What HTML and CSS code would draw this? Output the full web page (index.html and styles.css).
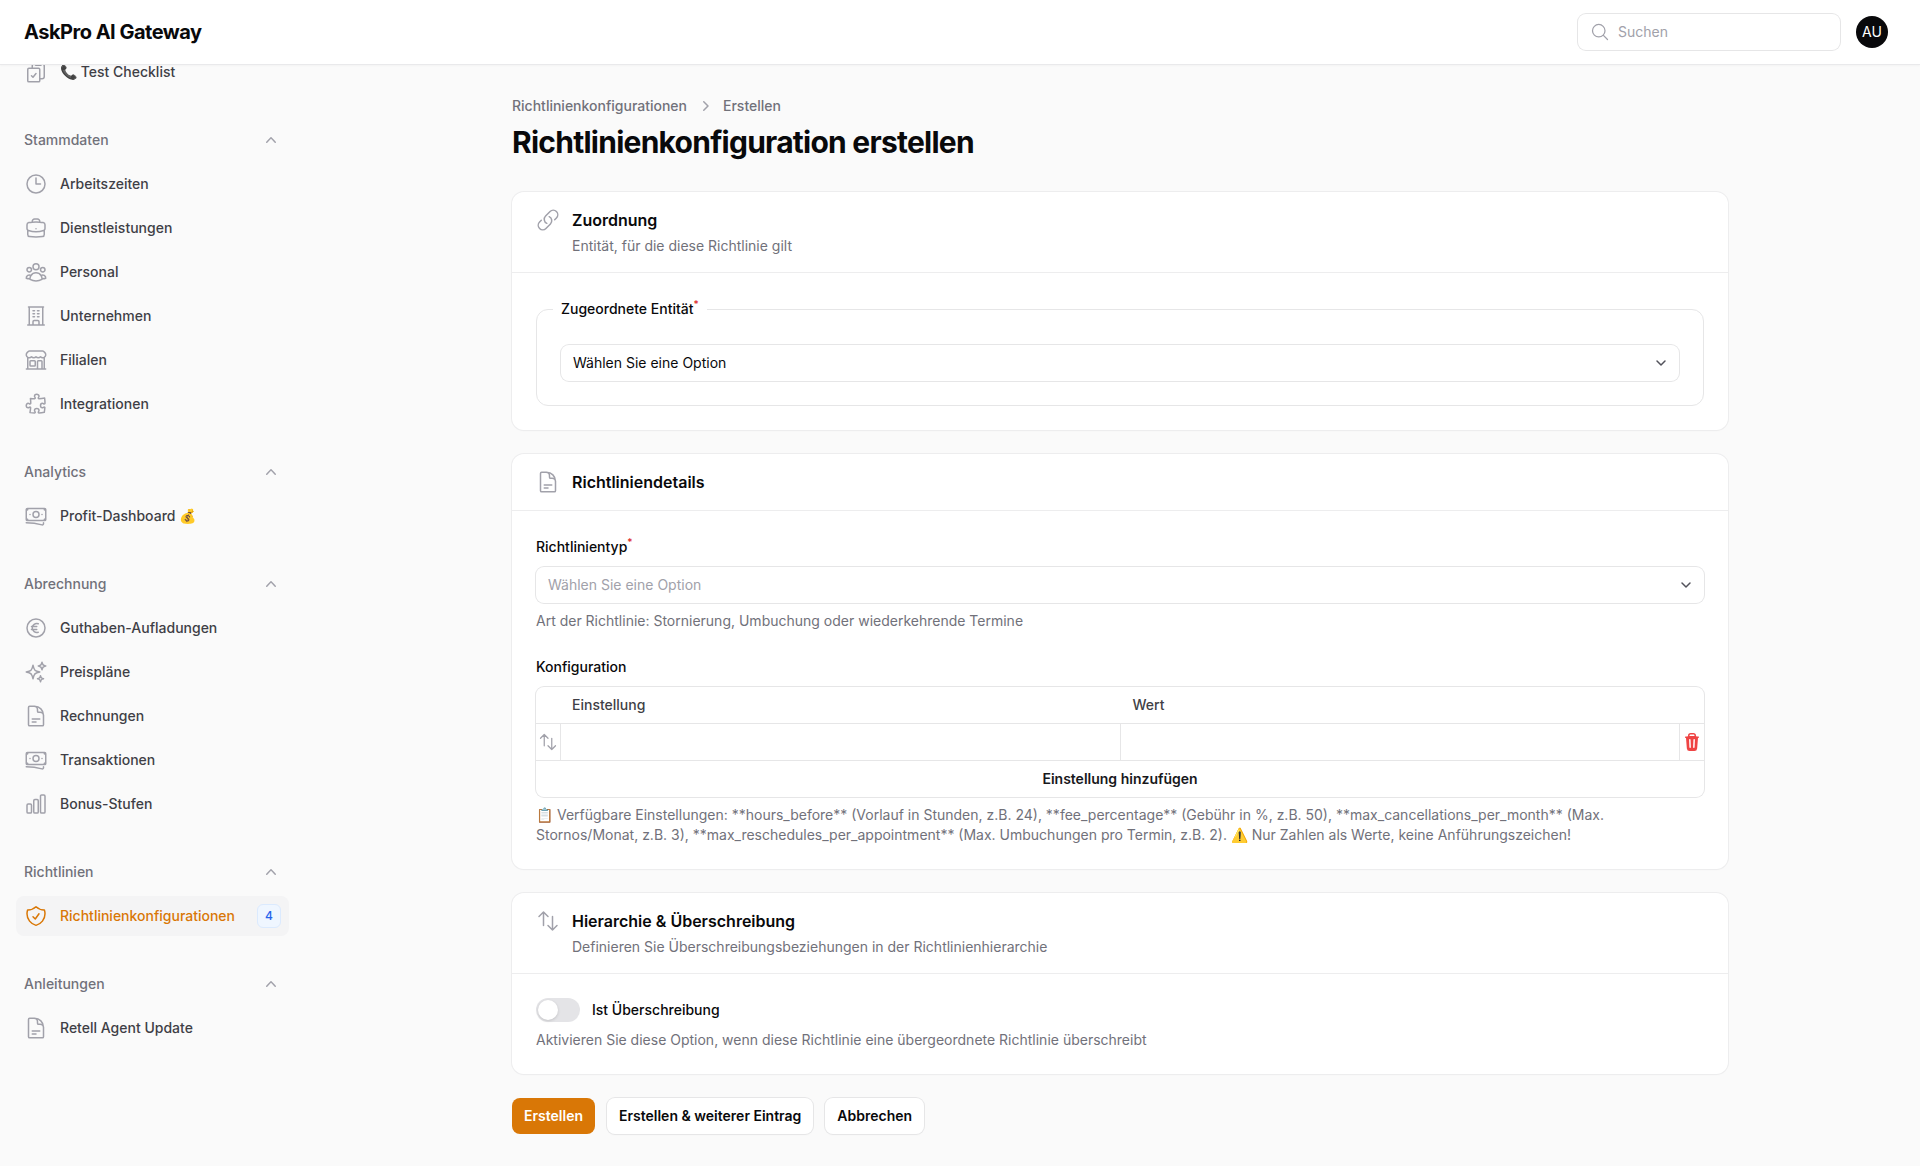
FILE: index.html
```html
<!DOCTYPE html>
<html lang="de">
  <head>
    <meta charset="UTF-8" />
    <meta name="viewport" content="width=device-width, initial-scale=1.0" />
    <title>Richtlinienkonfiguration erstellen</title>
    <link rel="stylesheet" href="styles.css">
  </head>
  <body>
    <svg class="icon-defs" xmlns="http://www.w3.org/2000/svg">
      <symbol id="i-checklist" viewBox="0 0 24 24"><path d="M11.35 3.836c-.065.21-.1.433-.1.664 0 .414.336.75.75.75h4.5a.75.75 0 0 0 .75-.75 2.25 2.25 0 0 0-.1-.664m-5.8 0A2.251 2.251 0 0 1 13.5 2.25H15c1.012 0 1.867.668 2.15 1.586m-5.8 0c-.376.023-.75.05-1.124.08C9.095 4.01 8.25 4.973 8.25 6.108V8.25m8.9-4.414c.376.023.75.05 1.124.08 1.131.094 1.976 1.057 1.976 2.192V16.5A2.25 2.25 0 0 1 18 18.75h-2.25m-7.5-10.5H4.875c-.621 0-1.125.504-1.125 1.125v11.25c0 .621.504 1.125 1.125 1.125h9.75c.621 0 1.125-.504 1.125-1.125V18.75m-7.5-10.5h6.375c.621 0 1.125.504 1.125 1.125v9.375m-8.25-3 1.5 1.5 3-3.75"/></symbol>
      <symbol id="i-clock" viewBox="0 0 24 24"><path d="M12 6v6h4.5m4.5 0a9 9 0 1 1-18 0 9 9 0 0 1 18 0Z"/></symbol>
      <symbol id="i-briefcase" viewBox="0 0 24 24"><path d="M20.25 14.15v4.25c0 1.094-.787 2.036-1.872 2.18-2.087.277-4.216.42-6.378.42s-4.291-.143-6.378-.42c-1.085-.144-1.872-1.086-1.872-2.18v-4.25m16.5 0a2.18 2.18 0 0 0 .75-1.661V8.706c0-1.081-.768-2.015-1.837-2.175a48.114 48.114 0 0 0-3.413-.387m4.5 8.006c-.194.165-.42.295-.673.38A23.978 23.978 0 0 1 12 15.75c-2.648 0-5.195-.429-7.577-1.22a2.016 2.016 0 0 1-.673-.38m0 0A2.18 2.18 0 0 1 3 12.489V8.706c0-1.081.768-2.015 1.837-2.175a48.111 48.111 0 0 1 3.413-.387m7.5 0V5.25A2.25 2.25 0 0 0 13.5 3h-3a2.25 2.25 0 0 0-2.25 2.25v.894m7.5 0a48.667 48.667 0 0 0-7.5 0M12 12.75h.008v.008H12v-.008Z"/></symbol>
      <symbol id="i-group" viewBox="0 0 24 24"><path d="M18 18.72a9.094 9.094 0 0 0 3.741-.479 3 3 0 0 0-4.682-2.72m.94 3.198.001.031c0 .225-.012.447-.037.666A11.944 11.944 0 0 1 12 21c-2.17 0-4.207-.576-5.963-1.584A6.062 6.062 0 0 1 6 18.719m12 0a5.971 5.971 0 0 0-.941-3.197m0 0A5.995 5.995 0 0 0 12 12.75a5.995 5.995 0 0 0-5.058 2.772m0 0a3 3 0 0 0-4.681 2.72 8.986 8.986 0 0 0 3.74.477m.94-3.197a5.971 5.971 0 0 0-.94 3.197M15 6.75a3 3 0 1 1-6 0 3 3 0 0 1 6 0Zm6 3a2.25 2.25 0 1 1-4.5 0 2.25 2.25 0 0 1 4.5 0Zm-13.5 0a2.25 2.25 0 1 1-4.5 0 2.25 2.25 0 0 1 4.5 0Z"/></symbol>
      <symbol id="i-office" viewBox="0 0 24 24"><path d="M3.75 21h16.5M4.5 3h15M5.25 3v18m13.5-18v18M9 6.75h1.5m-1.5 3h1.5m-1.5 3h1.5m3-6H15m-1.5 3H15m-1.5 3H15M9 21v-3.375c0-.621.504-1.125 1.125-1.125h3.75c.621 0 1.125.504 1.125 1.125V21"/></symbol>
      <symbol id="i-store" viewBox="0 0 24 24"><path d="M13.5 21v-7.5a.75.75 0 0 1 .75-.75h3a.75.75 0 0 1 .75.75V21m-4.5 0H2.36m11.14 0H18m0 0h3.64m-1.39 0V9.349M3.75 21V9.349m0 0a3.001 3.001 0 0 0 3.75-.615A2.993 2.993 0 0 0 9.75 9.75c.896 0 1.7-.393 2.25-1.016a2.993 2.993 0 0 0 2.25 1.016c.896 0 1.7-.393 2.25-1.015a3.001 3.001 0 0 0 3.75.614m-16.5 0a3.004 3.004 0 0 1-.621-4.72l1.189-1.19A1.5 1.5 0 0 1 5.378 3h13.243a1.5 1.5 0 0 1 1.06.44l1.19 1.189a3 3 0 0 1-.621 4.72M6.75 18h3.75a.75.75 0 0 0 .75-.75V13.5a.75.75 0 0 0-.75-.75H6.75a.75.75 0 0 0-.75.75v3.75c0 .414.336.75.75.75Z"/></symbol>
      <symbol id="i-puzzle" viewBox="0 0 24 24"><path d="M14.25 6.087c0-.355.186-.676.401-.959.221-.29.349-.634.349-1.003 0-1.036-1.007-1.875-2.25-1.875s-2.25.84-2.25 1.875c0 .369.128.713.349 1.003.215.283.401.604.401.959v0a.64.64 0 0 1-.657.643 48.39 48.39 0 0 1-4.163-.3c.186 1.613.293 3.25.315 4.907a.656.656 0 0 1-.658.663v0c-.355 0-.676-.186-.959-.401a1.647 1.647 0 0 0-1.003-.349c-1.036 0-1.875 1.007-1.875 2.25s.84 2.25 1.875 2.25c.369 0 .713-.128 1.003-.349.283-.215.604-.401.959-.401v0c.31 0 .555.26.532.57a48.039 48.039 0 0 1-.642 5.056c1.518.19 3.058.309 4.616.354a.64.64 0 0 0 .657-.643v0c0-.355-.186-.676-.401-.959a1.647 1.647 0 0 1-.349-1.003c0-1.035 1.008-1.875 2.25-1.875 1.243 0 2.25.84 2.25 1.875 0 .369-.128.713-.349 1.003-.215.283-.4.604-.4.959v0c0 .333.277.599.61.58a48.1 48.1 0 0 0 5.427-.63 48.05 48.05 0 0 0 .582-4.717.532.532 0 0 0-.533-.57v0c-.355 0-.676.186-.959.401-.29.221-.634.349-1.003.349-1.035 0-1.875-1.007-1.875-2.25s.84-2.25 1.875-2.25c.37 0 .713.128 1.003.349.283.215.604.401.96.401v0a.656.656 0 0 0 .658-.663 48.422 48.422 0 0 0-.37-5.36c-1.886.342-3.81.574-5.766.689a.578.578 0 0 1-.61-.58v0Z"/></symbol>
      <symbol id="i-banknotes" viewBox="0 0 24 24"><path d="M2.25 18.75a60.07 60.07 0 0 1 15.797 2.101c.727.198 1.453-.342 1.453-1.096V18.75M3.75 4.5v.75A.75.75 0 0 1 3 6h-.75m0 0v-.375c0-.621.504-1.125 1.125-1.125H20.25M2.25 6v9m18-10.5v.75c0 .414.336.75.75.75h.75m-1.5-1.5h.375c.621 0 1.125.504 1.125 1.125v9.75c0 .621-.504 1.125-1.125 1.125h-.375m1.5-1.5H21a.75.75 0 0 0-.75.75v.75m0 0H3.75m0 0h-.375a1.125 1.125 0 0 1-1.125-1.125V15m1.5 1.5v-.75A.75.75 0 0 0 3 15h-.75M15 10.5a3 3 0 1 1-6 0 3 3 0 0 1 6 0Zm3 0h.008v.008H18V10.5Zm-12 0h.008v.008H6V10.5Z"/></symbol>
      <symbol id="i-euro" viewBox="0 0 24 24"><path d="M14.25 7.756a4.5 4.5 0 1 0 0 8.488M7.5 10.5h5.25m-5.25 3h5.25M21 12a9 9 0 1 1-18 0 9 9 0 0 1 18 0Z"/></symbol>
      <symbol id="i-sparkles" viewBox="0 0 24 24"><path d="M9.813 15.904 9 18.75l-.813-2.846a4.5 4.5 0 0 0-3.09-3.09L2.25 12l2.846-.813a4.5 4.5 0 0 0 3.09-3.09L9 5.25l.813 2.846a4.5 4.5 0 0 0 3.09 3.09L15.75 12l-2.846.813a4.5 4.5 0 0 0-3.09 3.09ZM18.259 8.715 18 9.75l-.259-1.035a3.375 3.375 0 0 0-2.455-2.456L14.25 6l1.036-.259a3.375 3.375 0 0 0 2.455-2.456L18 2.25l.259 1.035a3.375 3.375 0 0 0 2.456 2.456L21.75 6l-1.035.259a3.375 3.375 0 0 0-2.456 2.456ZM16.894 20.567 16.5 21.75l-.394-1.183a2.25 2.25 0 0 0-1.423-1.423L13.5 18.75l1.183-.394a2.25 2.25 0 0 0 1.423-1.423l.394-1.183.394 1.183a2.25 2.25 0 0 0 1.423 1.423l1.183.394-1.183.394a2.25 2.25 0 0 0-1.423 1.423Z"/></symbol>
      <symbol id="i-document" viewBox="0 0 24 24"><path d="M19.5 14.25v-2.625a3.375 3.375 0 0 0-3.375-3.375h-1.5A1.125 1.125 0 0 1 13.5 7.125v-1.5a3.375 3.375 0 0 0-3.375-3.375H8.25m0 12.75h7.5m-7.5 3H12M10.5 2.25H5.625c-.621 0-1.125.504-1.125 1.125v17.25c0 .621.504 1.125 1.125 1.125h12.75c.621 0 1.125-.504 1.125-1.125V11.25a9 9 0 0 0-9-9Z"/></symbol>
      <symbol id="i-chart" viewBox="0 0 24 24"><path d="M3 13.125C3 12.504 3.504 12 4.125 12h2.25c.621 0 1.125.504 1.125 1.125v6.75C7.5 20.496 6.996 21 6.375 21h-2.25A1.125 1.125 0 0 1 3 19.875v-6.75ZM9.75 8.625c0-.621.504-1.125 1.125-1.125h2.25c.621 0 1.125.504 1.125 1.125v11.25c0 .621-.504 1.125-1.125 1.125h-2.25a1.125 1.125 0 0 1-1.125-1.125V8.625ZM16.5 4.125c0-.621.504-1.125 1.125-1.125h2.25C20.496 3 21 3.504 21 4.125v15.75c0 .621-.504 1.125-1.125 1.125h-2.25a1.125 1.125 0 0 1-1.125-1.125V4.125Z"/></symbol>
      <symbol id="i-shield" viewBox="0 0 24 24"><path d="M9 12.75 11.25 15 15 9.75m-3-7.036A11.959 11.959 0 0 1 3.598 6 11.99 11.99 0 0 0 3 9.749c0 5.592 3.824 10.29 9 11.623 5.176-1.332 9-6.03 9-11.622 0-1.31-.21-2.571-.598-3.751h-.152c-3.196 0-6.1-1.248-8.25-3.286Z"/></symbol>
      <symbol id="i-link" viewBox="0 0 24 24"><path d="M13.19 8.688a4.5 4.5 0 0 1 1.242 7.244l-4.5 4.5a4.5 4.5 0 0 1-6.364-6.364l1.757-1.757m13.35-.622 1.757-1.757a4.5 4.5 0 0 0-6.364-6.364l-4.5 4.5a4.5 4.5 0 0 0 1.242 7.244"/></symbol>
      <symbol id="i-updown" viewBox="0 0 24 24"><path d="M3 7.5 7.5 3m0 0L12 7.5M7.5 3v13.5m13.5 0L16.5 21m0 0L12 16.5m4.5 4.5V7.5"/></symbol>
      <symbol id="i-search" viewBox="0 0 24 24"><path d="m21 21-5.197-5.197m0 0A7.5 7.5 0 1 0 5.196 5.196a7.5 7.5 0 0 0 10.607 10.607Z"/></symbol>
      <symbol id="i-up" viewBox="0 0 20 20"><path d="M14.77 12.79a.75.75 0 0 1-1.06-.02L10 8.832 6.29 12.77a.75.75 0 1 1-1.08-1.04l4.25-4.5a.75.75 0 0 1 1.08 0l4.25 4.5c.29.3.28.77-.02 1.06Z"/></symbol>
      <symbol id="i-right" viewBox="0 0 20 20"><path d="M8.22 5.22a.75.75 0 0 1 1.06 0l4.25 4.25a.75.75 0 0 1 0 1.06l-4.25 4.25a.75.75 0 0 1-1.06-1.06L11.94 10 8.22 6.28a.75.75 0 0 1 0-1.06Z"/></symbol>
      <symbol id="i-down" viewBox="0 0 20 20"><path d="m6 8 4 4 4-4"/></symbol>
    </svg>

    <header class="topbar">
      <div class="brand">AskPro AI Gateway</div>
      <div class="topbar-right">
        <label class="search">
          <svg class="search-icon"><use href="#i-search"></use></svg>
          <input type="text" class="search-input" placeholder="Suchen" />
        </label>
        <div class="avatar">AU</div>
      </div>
    </header>

    <div class="layout">
      <aside class="sidebar">
        <nav class="nav">
          <div class="nav-group nav-group-first">
            <a class="nav-item"><svg class="nav-icon"><use href="#i-checklist"></use></svg><span>📞 Test Checklist</span></a>
          </div>

          <div class="nav-group">
            <div class="nav-label">Stammdaten <svg class="nav-chevron"><use href="#i-up"></use></svg></div>
            <a class="nav-item"><svg class="nav-icon"><use href="#i-clock"></use></svg><span>Arbeitszeiten</span></a>
            <a class="nav-item"><svg class="nav-icon"><use href="#i-briefcase"></use></svg><span>Dienstleistungen</span></a>
            <a class="nav-item"><svg class="nav-icon"><use href="#i-group"></use></svg><span>Personal</span></a>
            <a class="nav-item"><svg class="nav-icon"><use href="#i-office"></use></svg><span>Unternehmen</span></a>
            <a class="nav-item"><svg class="nav-icon"><use href="#i-store"></use></svg><span>Filialen</span></a>
            <a class="nav-item"><svg class="nav-icon"><use href="#i-puzzle"></use></svg><span>Integrationen</span></a>
          </div>

          <div class="nav-group">
            <div class="nav-label">Analytics <svg class="nav-chevron"><use href="#i-up"></use></svg></div>
            <a class="nav-item"><svg class="nav-icon"><use href="#i-banknotes"></use></svg><span>Profit-Dashboard 💰</span></a>
          </div>

          <div class="nav-group">
            <div class="nav-label">Abrechnung <svg class="nav-chevron"><use href="#i-up"></use></svg></div>
            <a class="nav-item"><svg class="nav-icon"><use href="#i-euro"></use></svg><span>Guthaben-Aufladungen</span></a>
            <a class="nav-item"><svg class="nav-icon"><use href="#i-sparkles"></use></svg><span>Preispläne</span></a>
            <a class="nav-item"><svg class="nav-icon"><use href="#i-document"></use></svg><span>Rechnungen</span></a>
            <a class="nav-item"><svg class="nav-icon"><use href="#i-banknotes"></use></svg><span>Transaktionen</span></a>
            <a class="nav-item"><svg class="nav-icon"><use href="#i-chart"></use></svg><span>Bonus-Stufen</span></a>
          </div>

          <div class="nav-group">
            <div class="nav-label">Richtlinien <svg class="nav-chevron"><use href="#i-up"></use></svg></div>
            <a class="nav-item nav-item-active">
              <svg class="nav-icon"><use href="#i-shield"></use></svg>
              <span>Richtlinienkonfigurationen</span>
              <span class="nav-badge">4</span>
            </a>
          </div>

          <div class="nav-group">
            <div class="nav-label">Anleitungen <svg class="nav-chevron"><use href="#i-up"></use></svg></div>
            <a class="nav-item"><svg class="nav-icon"><use href="#i-document"></use></svg><span>Retell Agent Update</span></a>
          </div>
        </nav>
      </aside>

      <main class="main">
        <div class="breadcrumbs">
          <span>Richtlinienkonfigurationen</span>
          <svg class="crumb-sep"><use href="#i-right"></use></svg>
          <span>Erstellen</span>
        </div>
        <h1 class="page-title">Richtlinienkonfiguration erstellen</h1>

        <form class="form">
          <section class="card">
            <div class="card-head">
              <svg class="card-icon"><use href="#i-link"></use></svg>
              <div>
                <h2 class="card-title">Zuordnung</h2>
                <p class="card-sub">Entität, für die diese Richtlinie gilt</p>
              </div>
            </div>
            <div class="card-body">
              <fieldset class="fieldset">
                <legend class="legend">Zugeordnete Entität<sup class="req">*</sup></legend>
                <div class="select">
                  <span>Wählen Sie eine Option</span>
                  <svg class="select-chevron"><use href="#i-down"></use></svg>
                </div>
              </fieldset>
            </div>
          </section>

          <section class="card">
            <div class="card-head">
              <svg class="card-icon"><use href="#i-document"></use></svg>
              <h2 class="card-title">Richtliniendetails</h2>
            </div>
            <div class="card-body">
              <div class="field">
                <div class="label">Richtlinientyp<sup class="req">*</sup></div>
                <div class="select select-empty">
                  <span>Wählen Sie eine Option</span>
                  <svg class="select-chevron"><use href="#i-down"></use></svg>
                </div>
                <p class="hint">Art der Richtlinie: Stornierung, Umbuchung oder wiederkehrende Termine</p>
              </div>

              <div class="field">
                <div class="label">Konfiguration</div>
                <div class="kv">
                  <div class="kv-row kv-head">
                    <div></div>
                    <div class="kv-th">Einstellung</div>
                    <div class="kv-th kv-th-value">Wert</div>
                    <div></div>
                  </div>
                  <div class="kv-row kv-line">
                    <div class="kv-handle"><svg class="kv-drag"><use href="#i-updown"></use></svg></div>
                    <input type="text" class="kv-input" />
                    <input type="text" class="kv-input" />
                    <div class="kv-delete">
                      <svg class="kv-trash" viewBox="0 0 20 20"><path fill-rule="evenodd" clip-rule="evenodd" d="M8.75 1A2.75 2.75 0 0 0 6 3.75v.443c-.795.077-1.584.176-2.365.298a.75.75 0 1 0 .23 1.482l.149-.022.841 10.518A2.75 2.75 0 0 0 7.596 19h4.807a2.75 2.75 0 0 0 2.742-2.53l.841-10.52.149.023a.75.75 0 0 0 .23-1.482A41.03 41.03 0 0 0 14 4.193V3.75A2.75 2.75 0 0 0 11.25 1h-2.5ZM10 4c.84 0 1.673.025 2.5.075V3.75c0-.69-.56-1.25-1.25-1.25h-2.5c-.69 0-1.25.56-1.25 1.25v.325C8.327 4.025 9.16 4 10 4ZM8.58 7.72a.75.75 0 0 0-1.5.06l.3 7.5a.75.75 0 1 0 1.5-.06l-.3-7.5Zm4.34.06a.75.75 0 1 0-1.5-.06l-.3 7.5a.75.75 0 1 0 1.5.06l.3-7.5Z"/></svg>
                    </div>
                  </div>
                  <div class="kv-add">Einstellung hinzufügen</div>
                </div>
                <p class="hint">📋 Verfügbare Einstellungen: **hours_before** (Vorlauf in Stunden, z.B. 24), **fee_percentage** (Gebühr in %, z.B. 50), **max_cancellations_per_month** (Max. Stornos/Monat, z.B. 3), **max_reschedules_per_appointment** (Max. Umbuchungen pro Termin, z.B. 2). ⚠️ Nur Zahlen als Werte, keine Anführungszeichen!</p>
              </div>
            </div>
          </section>

          <section class="card">
            <div class="card-head">
              <svg class="card-icon"><use href="#i-updown"></use></svg>
              <div>
                <h2 class="card-title">Hierarchie &amp; Überschreibung</h2>
                <p class="card-sub">Definieren Sie Überschreibungsbeziehungen in der Richtlinienhierarchie</p>
              </div>
            </div>
            <div class="card-body">
              <div class="field">
                <div class="toggle-row">
                  <span class="toggle"><span class="toggle-knob"></span></span>
                  <span class="toggle-label">Ist Überschreibung</span>
                </div>
                <p class="hint">Aktivieren Sie diese Option, wenn diese Richtlinie eine übergeordnete Richtlinie überschreibt</p>
              </div>
            </div>
          </section>

          <div class="actions">
            <button type="button" class="btn btn-primary">Erstellen</button>
            <button type="button" class="btn">Erstellen &amp; weiterer Eintrag</button>
            <button type="button" class="btn">Abbrechen</button>
          </div>
        </form>
      </main>
    </div>
  </body>
</html>
```

FILE: styles.css
```css
* {
  box-sizing: border-box;
}
html,
body {
  margin: 0;
  height: 100%;
}
body {
  background: #fafafa;
  color: #09090b;
  font-family: Inter, "Noto Sans", sans-serif;
  font-size: 14px;
  line-height: 20px;
  overflow: hidden;
}
.icon-defs {
  display: none;
}
svg {
  fill: none;
  stroke: currentColor;
  stroke-width: 1.5;
  stroke-linecap: round;
  stroke-linejoin: round;
  flex-shrink: 0;
}

/* top bar */
.topbar {
  position: relative;
  z-index: 2;
  height: 65px;
  display: flex;
  align-items: center;
  justify-content: space-between;
  padding: 0 32px 0 24px;
  background: #fff;
  border-bottom: 1px solid #e9e9eb;
  box-shadow: 0 1px 2px rgba(0, 0, 0, 0.03);
}
.brand {
  font-size: 20px;
  line-height: 28px;
  font-weight: 700;
  letter-spacing: -0.5px;
}
.topbar-right {
  display: flex;
  align-items: center;
  gap: 16px;
}
.search {
  width: 262px;
  height: 36px;
  display: flex;
  align-items: center;
  gap: 8px;
  padding: 0 12px;
  background: #fff;
  border-radius: 8px;
  box-shadow: 0 0 0 1px #e6e6e7;
}
.search-icon {
  width: 20px;
  height: 20px;
  color: #a1a1aa;
}
.search-input {
  flex: 1;
  min-width: 0;
  border: 0;
  outline: none;
  padding: 0;
  background: none;
  font: inherit;
}
.search-input::placeholder {
  color: #a1a1aa;
}
.avatar {
  width: 32px;
  height: 32px;
  border-radius: 50%;
  display: flex;
  align-items: center;
  justify-content: center;
  background: #09090b;
  color: #fff;
}

/* sidebar */
.layout {
  display: flex;
  height: calc(100% - 65px);
}
.sidebar {
  width: 320px;
  flex-shrink: 0;
  overflow: hidden;
}
.nav {
  margin-top: -13px;
  padding: 0 31px 0 16px;
}
.nav-group {
  display: flex;
  flex-direction: column;
  gap: 4px;
  margin-top: 28px;
}
.nav-group-first {
  margin-top: 0;
}
.nav-label {
  height: 40px;
  display: flex;
  align-items: center;
  justify-content: space-between;
  padding: 0 8px;
  font-weight: 500;
  color: #71717a;
}
.nav-chevron {
  width: 20px;
  height: 20px;
  fill: #a1a1aa;
  stroke: none;
}
.nav-item {
  height: 40px;
  display: flex;
  align-items: center;
  gap: 12px;
  padding: 0 8px;
  border-radius: 8px;
  font-weight: 500;
  color: #3f3f46;
}
.nav-icon {
  width: 24px;
  height: 24px;
  color: #a1a1aa;
}
.nav-item-active {
  background: #f4f4f5;
  color: #d97706;
}
.nav-item-active .nav-icon {
  color: #d97706;
}
.nav-badge {
  width: 24px;
  height: 24px;
  margin-left: auto;
  display: flex;
  align-items: center;
  justify-content: center;
  background: #eff6ff;
  border: 1px solid #dbeafe;
  border-radius: 6px;
  font-size: 12px;
  line-height: 16px;
  color: #2563eb;
}

/* main column */
.main {
  flex: 1;
  min-width: 0;
  padding: 31px 192px 32px;
}
.breadcrumbs {
  display: flex;
  align-items: center;
  gap: 8px;
  font-weight: 500;
  color: #71717a;
}
.crumb-sep {
  width: 20px;
  height: 20px;
  fill: #a1a1aa;
  stroke: none;
}
.page-title {
  margin: 8px 0 32px;
  font-size: 30px;
  line-height: 36px;
  font-weight: 700;
  letter-spacing: -0.75px;
}
.form {
  display: flex;
  flex-direction: column;
  gap: 24px;
}
.card {
  background: #fff;
  border-radius: 12px;
  box-shadow: 0 0 0 1px #ededee, 0 1px 2px rgba(0, 0, 0, 0.03);
}
.card-head {
  display: flex;
  gap: 12px;
  padding: 16px 24px;
}
.card-icon {
  width: 24px;
  height: 24px;
  color: #a1a1aa;
}
.card-title {
  margin: 0;
  font-size: 16px;
  line-height: 24px;
  font-weight: 600;
}
.card-sub {
  margin: 4px 0 0;
  color: #71717a;
}
.card-body {
  display: flex;
  flex-direction: column;
  gap: 24px;
  padding: 24px;
  border-top: 1px solid #ededee;
}

/* form fields */
.fieldset {
  margin: 0;
  min-width: 0;
  padding: 24px;
  border: 1px solid #e6e6e7;
  border-radius: 12px;
}
.legend {
  margin-left: -8px;
  padding: 0 8px;
  line-height: 24px;
  font-weight: 500;
}
.label {
  margin-bottom: 8px;
  line-height: 24px;
  font-weight: 500;
}
.req {
  color: #dc2626;
  font-size: 10px;
  line-height: 0;
  font-weight: 500;
}
.select {
  height: 36px;
  display: flex;
  align-items: center;
  justify-content: space-between;
  padding: 0 8px 0 12px;
  background: #fff;
  border-radius: 8px;
  box-shadow: 0 0 0 1px #e6e6e7;
}
.select-empty {
  color: #a1a1aa;
}
.select-chevron {
  width: 20px;
  height: 20px;
  color: #52525b;
}
.hint {
  margin: 8px 0 0;
  color: #71717a;
}

/* key value table */
.kv {
  border-radius: 8px;
  background: #fff;
  box-shadow: 0 0 0 1px #e6e6e7;
}
.kv-row {
  display: grid;
  grid-template-columns: 24px 1fr 1fr 25px;
  height: 36px;
}
.kv-line {
  height: 38px;
  border-top: 1px solid #e6e6e7;
  border-bottom: 1px solid #e6e6e7;
}
.kv-th {
  padding: 0 12px;
  line-height: 36px;
  font-weight: 500;
  color: #3f3f46;
}
.kv-th-value {
  padding-left: 13px;
}
.kv-handle {
  display: flex;
  align-items: center;
  justify-content: center;
}
.kv-drag {
  width: 20px;
  height: 20px;
  color: #a1a1aa;
}
.kv-input {
  min-width: 0;
  padding: 0 12px;
  border: 0;
  border-left: 1px solid #e6e6e7;
  outline: none;
  background: none;
  font: inherit;
}
.kv-delete {
  display: flex;
  align-items: center;
  justify-content: center;
  border-left: 1px solid #e6e6e7;
}
.kv-trash {
  width: 20px;
  height: 20px;
  fill: #ef4444;
  stroke: none;
}
.kv-add {
  height: 36px;
  line-height: 36px;
  text-align: center;
  font-weight: 600;
  color: #18181b;
}

/* toggle */
.toggle-row {
  display: flex;
  align-items: center;
  gap: 12px;
}
.toggle {
  width: 44px;
  height: 24px;
  padding: 2px;
  display: block;
  border-radius: 12px;
  background: #e4e4e7;
}
.toggle-knob {
  width: 20px;
  height: 20px;
  display: block;
  border-radius: 50%;
  background: #fff;
  box-shadow: 0 1px 3px rgba(0, 0, 0, 0.15);
}
.toggle-label {
  font-weight: 500;
}

/* buttons */
.actions {
  display: flex;
  gap: 12px;
}
.btn {
  height: 36px;
  padding: 0 12px;
  border: 0;
  border-radius: 8px;
  background: #fff;
  color: #09090b;
  font: inherit;
  font-weight: 600;
  box-shadow: 0 0 0 1px #e6e6e7, 0 1px 2px rgba(0, 0, 0, 0.04);
}
.btn-primary {
  background: #d97706;
  color: #fff;
  box-shadow: none;
}
```
